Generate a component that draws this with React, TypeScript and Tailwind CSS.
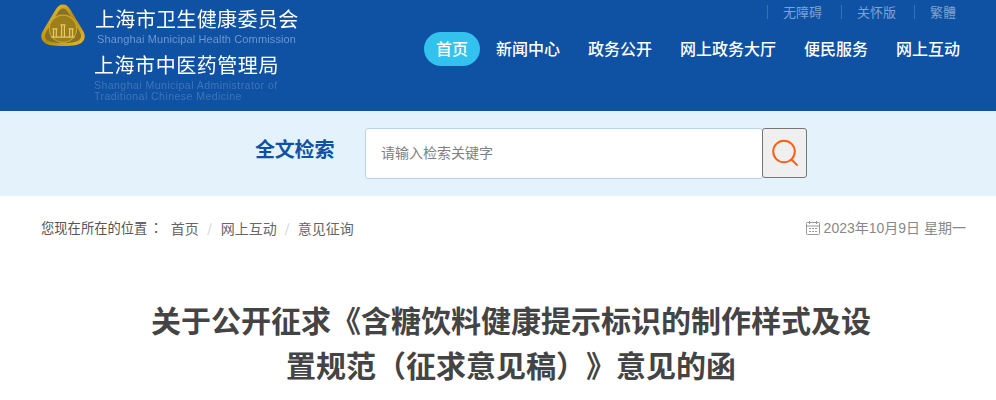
const navItems = ['新闻中心', '政务公开', '网上政务大厅', '便民服务', '网上互动'];

function Emblem() {
  return (
    <svg width="44" height="43" viewBox="3 1 40 42.500" className="shrink-0">
      <defs>
        <linearGradient id="gold" x1="0" y1="0" x2="1" y2="1">
          <stop offset="0" stopColor="#f4d23a" />
          <stop offset="0.5" stopColor="#b98a10" />
          <stop offset="1" stopColor="#e8bd22" />
        </linearGradient>
      </defs>
      <path d="M23 1.500c3.500 0 5.500 2 7.500 5.500l12 20c3 5 2.500 9-1 12-3 2.500-8 3.500-18.500 3.500S7.500 41.500 4.500 39c-3.500-3-4-7-1-12l12-20c2-3.500 4-5.500 7.500-5.500z" fill="url(#gold)" />
      <path d="M23 5.500c2 0 3.500 1.500 5 4l11.500 19c2 3.500 1.800 6-.5 8-2.500 2-7 3-16 3s-13.500-1-16-3c-2.300-2-2.500-4.500-.5-8L18 9.500c1.500-2.500 3-4 5-4z" fill="#857226" />
      <circle cx="23" cy="25.500" r="13.500" fill="#9c7f1a" stroke="#cfa826" strokeWidth="1" />
      <path d="M11.500 33h23v1.300h-23zM13 26h1.200v7H13zM15.800 26H17v7h-1.200zM21 22h1.200v11H21zM23.800 22H25v11h-1.200zM29 26h1.200v7H29zM31.800 26H33v7h-1.200zM12.500 25h5v1.200h-5zM20.500 21h5v1.200h-5zM28.500 25h5v1.200h-5z" fill="#e6c96a" />
    </svg>
  );
}

function SearchIcon() {
  return (
    <svg width="28" height="28" viewBox="0 0 28 28" fill="none" stroke="#fa5f12" strokeWidth="2" strokeLinecap="round">
      <circle cx="13" cy="12.500" r="10.800" />
      <path d="M21 21l5 5" />
    </svg>
  );
}

function CalendarIcon() {
  return (
    <svg width="14" height="14" viewBox="0 0 14 14" fill="none" stroke="#999" strokeWidth="1">
      <rect x="0.500" y="1.500" width="13" height="12" rx="1" />
      <path d="M0.500 5h13M3.500 0v3M10.500 0v3" />
      <path d="M3 7.500h2M6 7.500h2M9 7.500h2M3 10.500h2M6 10.500h2M9 10.500h2" />
    </svg>
  );
}

export default function App() {
  return (
    <div className="min-h-[400px] bg-white font-['Noto_Sans_CJK_SC',sans-serif] overflow-hidden [text-spacing-trim:space-all]">
      {/* header */}
      <div className="h-[111px] bg-[#0f51a3] flex justify-between pl-[41px] pr-[24px]">
        <div className="flex items-start pt-[4px] gap-[10px] blur-[0.3px]">
          <Emblem />
          <div className="flex flex-col">
            <div className="text-[20px] leading-[28px] mt-[1px] tracking-[0.35px] text-white whitespace-nowrap">上海市卫生健康委员会</div>
            <div className="font-['Liberation_Sans',sans-serif] text-[11px] leading-[13px] mt-[-0.5px] ml-[2px] tracking-[0.13px] text-[#6c97cf] whitespace-nowrap">Shanghai Municipal Health Commission</div>
            <div className="text-[20px] leading-[28px] mt-[5px] ml-[-1px] tracking-[0.55px] text-white whitespace-nowrap">上海市中医药管理局</div>
            <div className="font-['Liberation_Sans',sans-serif] text-[10.5px] leading-[11px] mt-[1px] ml-[-1px] tracking-[0.46px] text-[#3f74b8] whitespace-nowrap">
              Shanghai Municipal Administrator of
              <br />
              Traditional Chinese Medicine
            </div>
          </div>
        </div>

        <div className="flex flex-col items-end">
          <div className="flex items-center h-[14px] mt-[5px] mr-[16px] text-[13px] text-[#7fa2d0]">
            <span className="border-l border-[#3a70b3] pl-[15px] pr-[19px] leading-[14px] whitespace-nowrap">无障碍</span>
            <span className="border-l border-[#3a70b3] pl-[15px] pr-[18px] leading-[14px] whitespace-nowrap">关怀版</span>
            <span className="border-l border-[#3a70b3] pl-[15px] leading-[14px] whitespace-nowrap">繁體</span>
          </div>
          <div className="flex items-center gap-[4px] mt-[13px] text-[16px] font-medium text-white">
            <span className="h-[34px] leading-[32px] px-[12px] rounded-[17px] bg-[#33c1ee] whitespace-nowrap">首页</span>
            {navItems.map((item) => (
              <span key={item} className="h-[34px] leading-[32px] px-[12px] whitespace-nowrap">{item}</span>
            ))}
          </div>
        </div>
      </div>

      {/* search */}
      <div className="h-[85px] bg-[#e4f2fc] flex items-start pl-[255px] pt-[17px]">
        <div className="w-[110px] text-[20px] leading-[42px] font-bold text-[#0f51a3] tracking-[-0.2px]">全文检索</div>
        <div className="w-[398px] h-[51px] bg-white border border-[#b7d5ef] rounded-[3px] pl-[15px] text-[14px] leading-[47px] text-[#808080]">请输入检索关键字</div>
        <button className="w-[45px] h-[50px] ml-[-1px] bg-[#efefef] border border-[#767676] rounded-[3px] flex items-center justify-center">
          <SearchIcon />
        </button>
      </div>

      {/* breadcrumb */}
      <div className="flex items-center justify-between h-[20px] mt-[22px] pl-[41px] pr-[30px] text-[14px] leading-[20px]">
        <div className="flex items-center text-[#666] whitespace-nowrap">
          <span className="text-[13.300px] text-[#555] mr-[8px]">
            您现在所在的位置<span className="font-['Noto_Sans_CJK_TC',sans-serif] ml-[2px]">：</span>
          </span>
          <span>首页</span>
          <span className="w-[22px] text-center text-[#ccc] text-[12px]">/</span>
          <span>网上互动</span>
          <span className="w-[21px] text-center text-[#ccc] text-[12px]">/</span>
          <span>意见征询</span>
        </div>
        <div className="flex items-center gap-[4px] font-['Liberation_Sans','Noto_Sans_CJK_SC',sans-serif] text-[14px] text-[#888] whitespace-nowrap">
          <CalendarIcon />
          <span>2023年10月9日&nbsp;星期一</span>
        </div>
      </div>

      {/* title */}
      <h1 className="mt-[59px] pl-[26px] text-center text-[30px] leading-[45px] font-bold text-[#444] whitespace-nowrap">
        关于公开征求《含糖饮料健康提示标识的制作样式及设
        <br />
        置规范（征求意见稿）》意见的函
      </h1>
    </div>
  );
}
